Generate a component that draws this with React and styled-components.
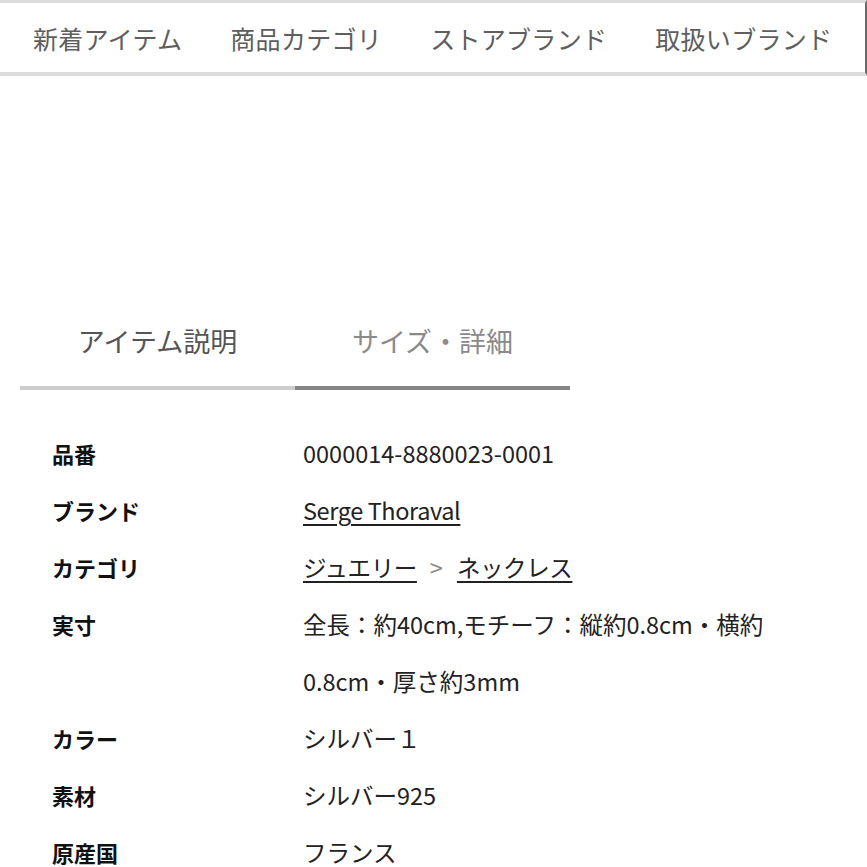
import React from 'react';
import styled, { createGlobalStyle } from 'styled-components';

const GlobalStyle = createGlobalStyle`
  body {
    margin: 0;
    background: #fff;
    font-family: "Noto Sans CJK JP", "Noto Sans", sans-serif;
  }
`;

const navItems = ['新着アイテム', '商品カテゴリ', 'ストアブランド', '取扱いブランド'];

const Nav = styled.nav`
  height: 69px;
  display: flex;
  align-items: center;
  gap: 48px;
  padding-left: 33px;
  border-top: 3px solid #dcdcdc;
  border-bottom: 4px solid #dcdcdc;
  border-right: 2px solid #6a6a6a;
  box-sizing: content-box;
`;

const NavItem = styled.a`
  font-size: 25px;
  color: #5e5e5e;
  white-space: nowrap;
  letter-spacing: 0.3px;
`;

const Tabs = styled.div`
  display: flex;
  width: 550px;
  margin: 234px 0 0 20px;
`;

const Tab = styled.div`
  flex: 1;
  height: 80px;
  display: flex;
  justify-content: center;
  align-items: flex-start;
  padding-top: 11px;
  box-sizing: border-box;
  font-size: 27px;
  color: ${props => (props.active ? '#8a8a8a' : '#555')};
  border-bottom: 4px solid ${props => (props.active ? '#858585' : '#cdcdcd')};
`;

const Table = styled.dl`
  display: grid;
  grid-template-columns: 251px 468px;
  margin: 35px 0 0 52px;
  line-height: 57px;
`;

const Label = styled.dt`
  font-size: 22px;
  font-weight: 700;
  color: #111;
`;

const Value = styled.dd`
  margin: 0;
  font-size: 23.5px;
  color: #222;
`;

const Link = styled.a`
  color: #222;
  text-decoration: underline;
  text-underline-offset: 4px;
  text-decoration-thickness: 2px;
  letter-spacing: -0.4px;
`;

const Sep = styled.span`
  color: #8a8a8a;
  margin: 0 14px 0 13px;
`;

const rows = [
  ['品番', '0000014-8880023-0001'],
  ['ブランド', <Link key="b">Serge Thoraval</Link>],
  [
    'カテゴリ',
    <>
      <Link>ジュエリー</Link>
      <Sep>&gt;</Sep>
      <Link>ネックレス</Link>
    </>,
  ],
  ['実寸', '全長：約40cm,モチーフ：縦約0.8cm・横約0.8cm・厚さ約3mm'],
  ['カラー', 'シルバー１'],
  ['素材', 'シルバー925'],
  ['原産国', 'フランス'],
];

export default function App() {
  return (
    <>
      <GlobalStyle />
      <Nav>
        {navItems.map(item => (
          <NavItem key={item}>{item}</NavItem>
        ))}
      </Nav>
      <Tabs>
        <Tab>アイテム説明</Tab>
        <Tab active>サイズ・詳細</Tab>
      </Tabs>
      <Table>
        {rows.map(([label, value]) => (
          <React.Fragment key={label}>
            <Label>{label}</Label>
            <Value>{value}</Value>
          </React.Fragment>
        ))}
      </Table>
    </>
  );
}
